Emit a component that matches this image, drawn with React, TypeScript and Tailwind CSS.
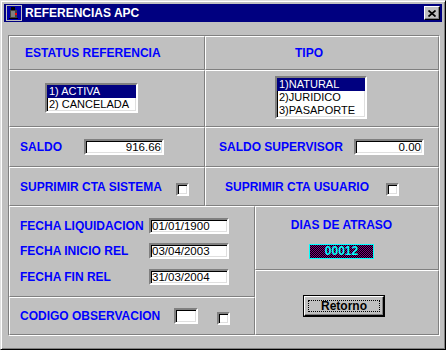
import React from "react";

const cell = "border border-t-white border-l-white border-r-[#808080] border-b-[#808080]";
const sunken = "border-2 border-t-[#808080] border-l-[#808080] border-r-white border-b-white shadow-[inset_1px_1px_0_#000,inset_-1px_-1px_0_#dfdfdf]";
const label = "text-[12px] leading-[14px] font-bold text-[#0000ff] whitespace-nowrap";

function Field({ value, w, right }: { value: string; w: string; right?: boolean }) {
  return (
    <div className={`${sunken} ${w} h-[16px] bg-white flex items-center ${right ? "justify-end pr-[1px]" : "pl-[1px]"} text-[11.5px] leading-[12px] text-black`}>
      {value}
    </div>
  );
}

function Check({ className = "" }: { className?: string }) {
  return <div className={`${sunken} w-[13px] h-[13px] bg-white shrink-0 ${className}`} />;
}

function ListBox({ items, w }: { items: string[]; w: string }) {
  return (
    <div className={`${sunken} ${w} bg-white`}>
      {items.map((t, i) => (
        <div
          key={t}
          className={`h-[13px] pl-[2px] text-[11px] leading-[13px] whitespace-nowrap ${i === 0 ? "bg-[#000080] text-white" : "text-black"}`}
        >
          {t}
        </div>
      ))}
    </div>
  );
}

function AppIcon() {
  return (
    <svg width="16" height="16" viewBox="0 0 16 16" className="shrink-0">
      <rect x="0" y="0" width="16" height="16" fill="#c0c0c0" />
      <rect x="1" y="1" width="14" height="14" fill="#0000a8" />
      <rect x="5" y="2" width="4" height="3" fill="#000" />
      <rect x="4" y="5" width="7" height="9" fill="#404040" />
      <rect x="5" y="6" width="4" height="6" fill="#808080" />
      <rect x="9" y="8" width="2" height="2" fill="#ff0000" />
      <rect x="3" y="13" width="9" height="1" fill="#000" />
    </svg>
  );
}

export default function App() {
  return (
    <div className="w-[446px] h-[350px] bg-[#c0c0c0] font-['Liberation_Sans',Arial,sans-serif] border border-t-[#dfdfdf] border-l-[#dfdfdf] border-r-black border-b-black shadow-[inset_1px_1px_0_#fff,inset_-1px_-1px_0_#808080] p-[3px] flex flex-col">
      {/* barra de título */}
      <div className="h-[18px] bg-[#000080] flex items-center pl-[2px] pr-[2px]">
        <AppIcon />
        <span className="ml-[3px] text-white font-bold text-[12px] leading-[14px]">REFERENCIAS APC</span>
        <button className="ml-auto w-[16px] h-[14px] bg-[#c0c0c0] border border-t-white border-l-white border-r-black border-b-black shadow-[inset_-1px_-1px_0_#808080] flex items-center justify-center">
          <svg width="8" height="7" viewBox="0 0 8 7">
            <path d="M0.5 0.5 L7.5 6.5 M7.5 0.5 L0.5 6.5" stroke="#000" strokeWidth="1.7" />
          </svg>
        </button>
      </div>

      <div className="ml-[4px] mt-[13px] w-[432px] h-[301px] border border-t-[#808080] border-l-[#808080] border-r-white border-b-white flex flex-col">
        <div className="flex h-[34px]">
          <div className={`${cell} w-[196px] flex items-center pl-[15px]`}>
            <span className={label}>ESTATUS REFERENCIA</span>
          </div>
          <div className={`${cell} flex-1 flex items-center pl-[89px]`}>
            <span className={label}>TIPO</span>
          </div>
        </div>

        <div className="flex h-[57px]">
          <div className={`${cell} w-[196px] pl-[35px] pt-[12px]`}>
            <ListBox w="w-[93px]" items={["1) ACTIVA", "2) CANCELADA"]} />
          </div>
          <div className={`${cell} flex-1 pl-[69px] pt-[5px]`}>
            <ListBox w="w-[92px]" items={["1)NATURAL", "2)JURIDICO", "3)PASAPORTE"]} />
          </div>
        </div>

        <div className="flex h-[40px]">
          <div className={`${cell} w-[196px] flex items-center pl-[10px]`}>
            <span className={`${label} w-[64px]`}>SALDO</span>
            <Field value="916.66" w="w-[80px]" right />
          </div>
          <div className={`${cell} flex-1 flex items-center pl-[13px]`}>
            <span className={`${label} w-[135px]`}>SALDO SUPERVISOR</span>
            <Field value="0.00" w="w-[70px]" right />
          </div>
        </div>

        <div className="flex h-[39px]">
          <div className={`${cell} w-[196px] flex items-center pl-[10px]`}>
            <span className={`${label} w-[156px]`}>SUPRIMIR CTA SISTEMA</span>
            <Check className="mt-[5px]" />
          </div>
          <div className={`${cell} flex-1 flex items-center pl-[19px]`}>
            <span className={`${label} w-[161px]`}>SUPRIMIR CTA USUARIO</span>
            <Check className="mt-[5px]" />
          </div>
        </div>

        <div className="flex flex-1">
          <div className="w-[246px] flex flex-col">
            <div className={`${cell} h-[91px] pl-[10px] pt-[11px] flex flex-col`}>
              <div className="flex items-center h-[16px]">
                <span className={`${label} w-[129px]`}>FECHA LIQUIDACION</span>
                <Field value="01/01/1900" w="w-[80px]" />
              </div>
              <div className="flex items-center h-[16px] mt-[9px]">
                <span className={`${label} w-[129px]`}>FECHA INICIO REL</span>
                <Field value="03/04/2003" w="w-[80px]" />
              </div>
              <div className="flex items-center h-[16px] mt-[10px]">
                <span className={`${label} w-[129px]`}>FECHA FIN REL</span>
                <Field value="31/03/2004" w="w-[80px]" />
              </div>
            </div>
            <div className={`${cell} flex-1 flex items-center pl-[10px]`}>
              <span className={`${label} w-[154px]`}>CODIGO OBSERVACION</span>
              <Field value="" w="w-[24px]" />
              <Check className="ml-[19px] mt-[4px]" />
            </div>
          </div>

          <div className="flex-1 flex flex-col">
            <div className={`${cell} h-[64px] flex flex-col items-center pt-[11px] pr-[11px]`}>
              <span className={label}>DIAS DE ATRASO</span>
              <div className="mt-[12px] w-[65px] h-[15px] border border-[#00ffff] bg-[repeating-conic-gradient(#800080_0%_25%,#000000_0%_50%)] bg-[length:2px_2px] flex items-center justify-center text-[#00ffff] font-bold text-[12px] leading-[13px]">
                00012
              </div>
            </div>
            <div className={`${cell} flex-1 pl-[48px] pt-[25px]`}>
              <button className="w-[80px] h-[20px] bg-[#c0c0c0] border border-t-white border-l-white border-r-black border-b-black shadow-[inset_-1px_-1px_0_#808080,0_0_0_1px_#000] p-[3px] flex">
                <span className="flex-1 border border-dotted border-black flex items-center justify-center text-[12px] leading-[12px] font-bold text-black">
                  Retorno
                </span>
              </button>
            </div>
          </div>
        </div>
      </div>
    </div>
  );
}
